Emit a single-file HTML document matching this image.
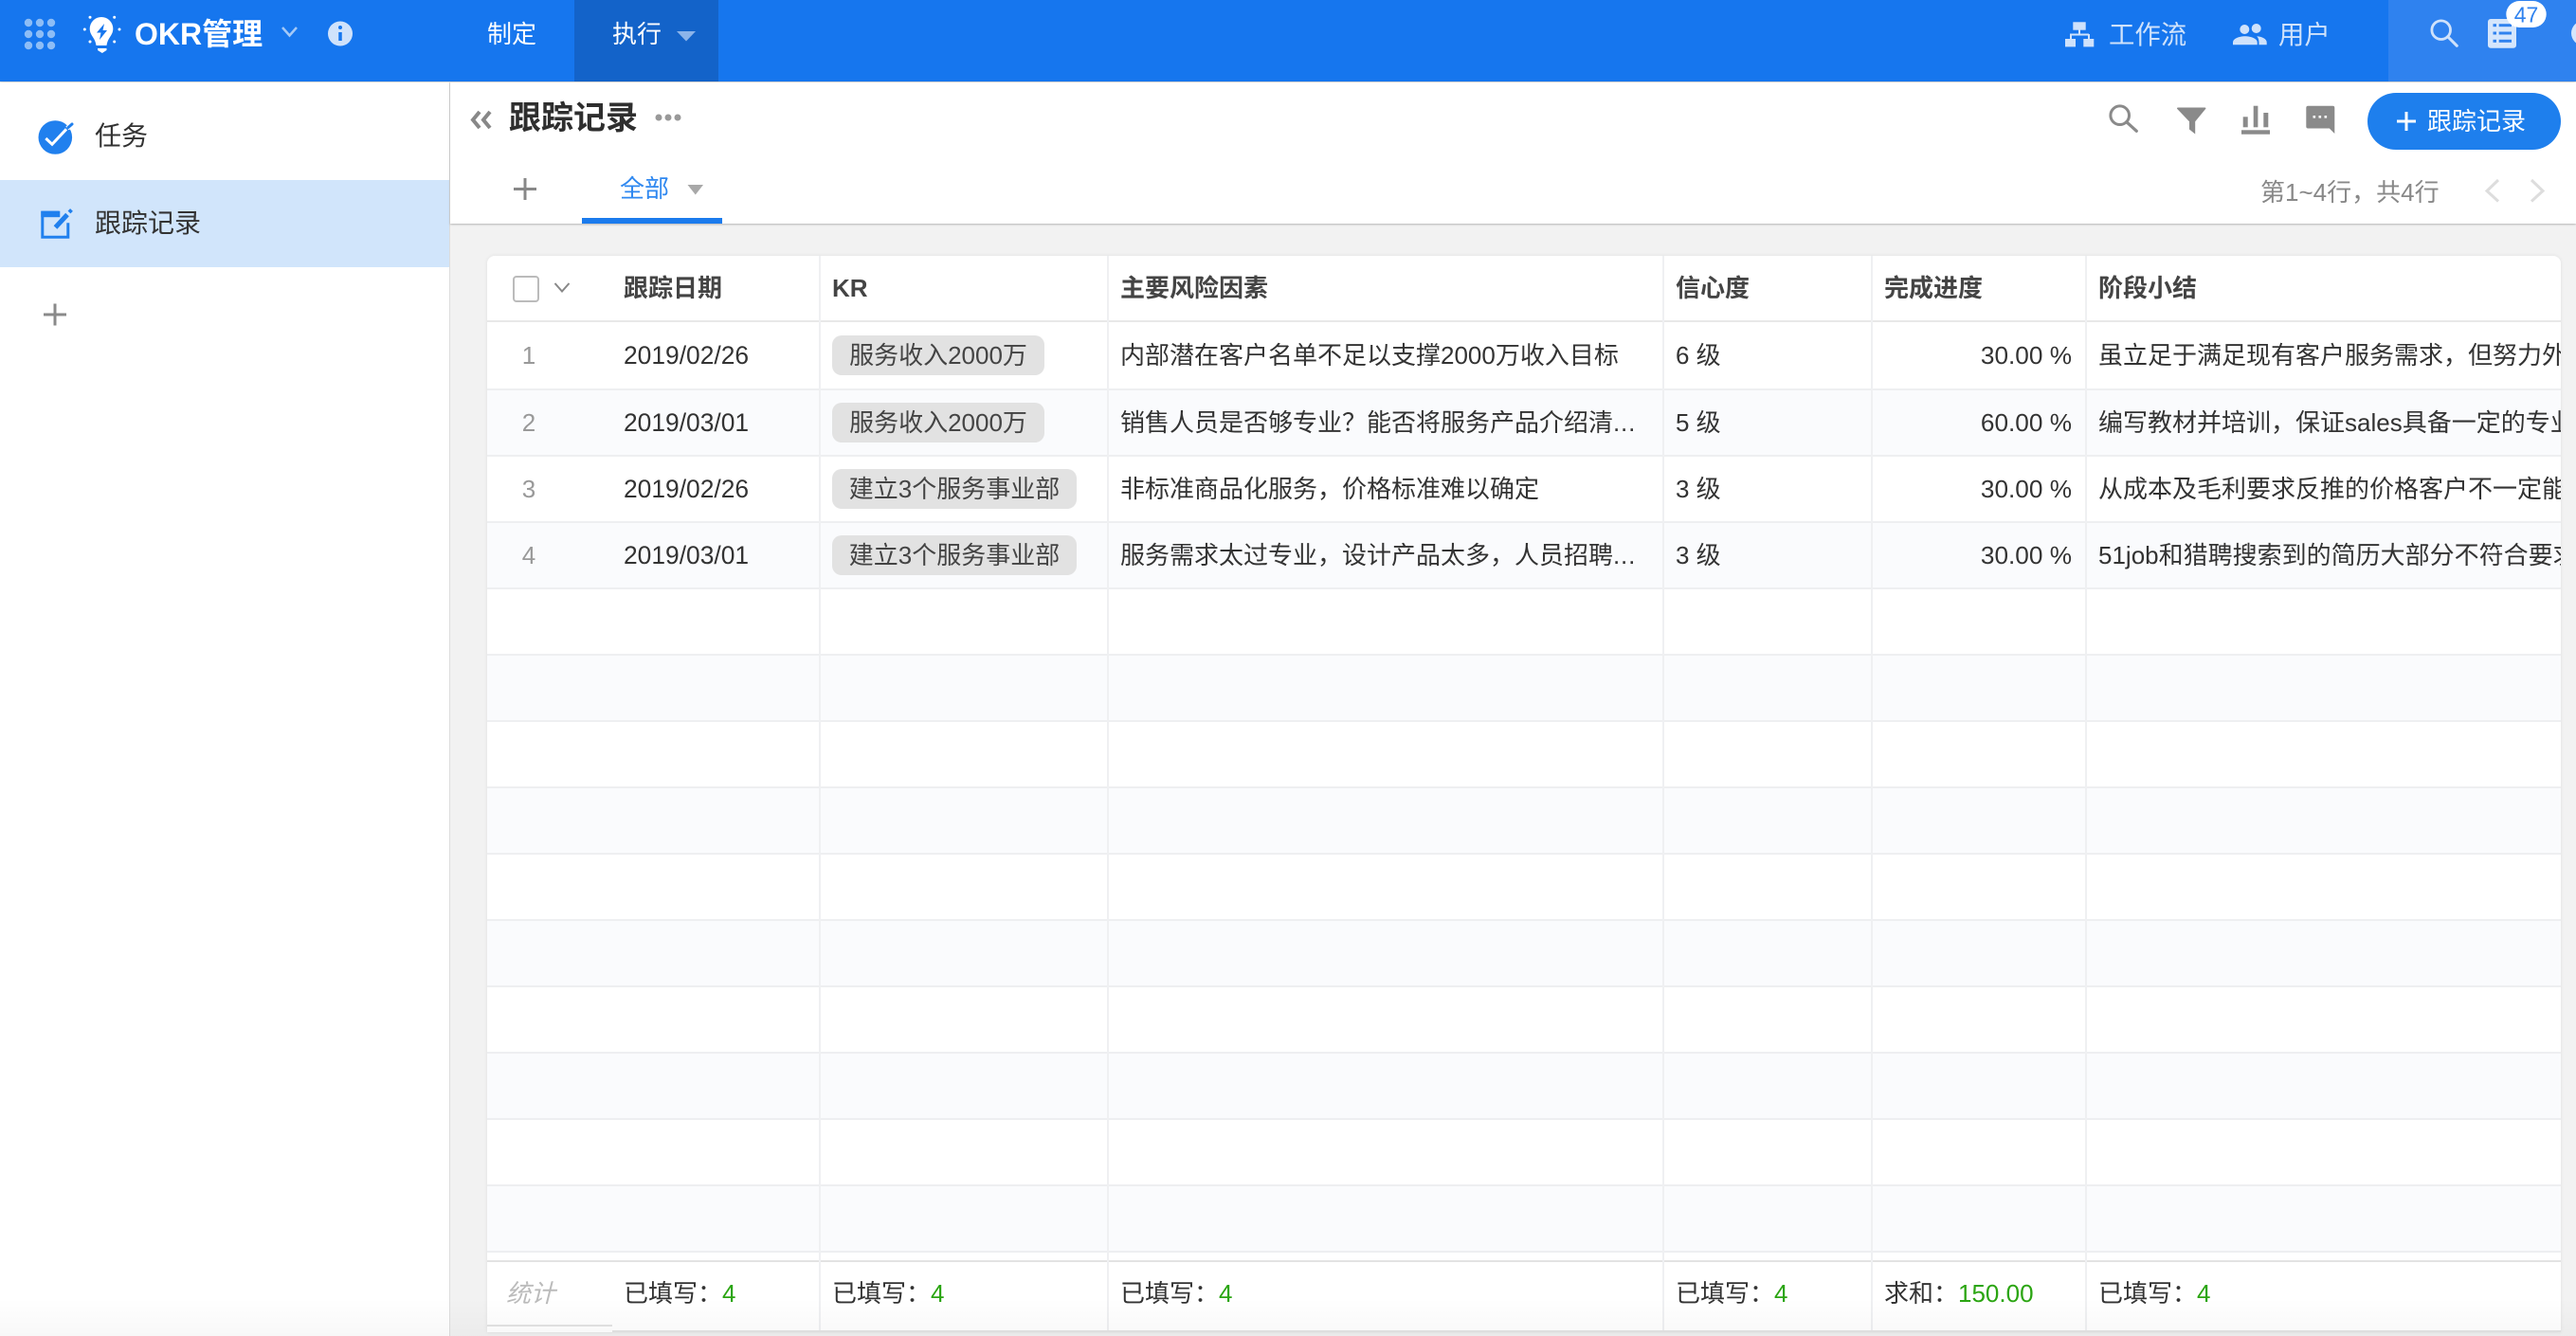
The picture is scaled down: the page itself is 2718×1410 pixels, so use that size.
<!DOCTYPE html>
<html lang="zh-CN">
<head>
<meta charset="utf-8">
<title>跟踪记录</title>
<style>
html,body{margin:0;padding:0;}
body{width:2718px;height:1410px;position:relative;overflow:hidden;background:#f2f2f2;font-family:"Liberation Sans","Noto Sans CJK SC",sans-serif;color:#333;font-size:26px;}
.b{position:absolute;}
.t{position:absolute;white-space:nowrap;height:40px;line-height:40px;font-size:26px;color:#333;}
.h{font-weight:700;color:#444;}
.g{color:#2ba512;}
.n{color:#999;width:40px;text-align:center;left:538px;}
.d{font-size:26.4px;left:658px;}
.e{letter-spacing:.8px;}
.tag{position:absolute;left:878px;height:42px;line-height:42px;background:#e2e2e2;border-radius:10px;color:#444;font-size:26px;text-align:center;white-space:nowrap;}
.v{position:absolute;width:2px;background:#eff0f2;top:270px;height:1136px;}
.l{position:absolute;left:514px;width:2188px;height:2px;background:#eeeff1;}
.a{position:absolute;left:514px;width:2188px;height:70px;background:#fafbfd;}
.r{width:2186px;left:0;text-align:right;font-size:26.2px;}
</style>
</head>
<body>
<!-- top bar -->
<div class="b" style="left:0;top:0;width:2718px;height:86px;background:#1676ee;box-shadow:0 1px 3px rgba(0,0,0,.2);"></div>
<div class="b" style="left:606px;top:0;width:152px;height:86px;background:#1363c9;"></div>
<div class="b" style="left:2520px;top:0;width:198px;height:86px;background:#2f82ef;"></div>

<!-- sidebar -->
<div class="b" style="left:0;top:87px;width:474px;height:1323px;background:#fff;border-right:1px solid #ddd;"></div>
<div class="b" style="left:0;top:190px;width:474px;height:92px;background:#d1e5fb;"></div>

<!-- header -->
<div class="b" style="left:475px;top:87px;width:2243px;height:149px;background:#fff;box-shadow:0 1px 2px rgba(0,0,0,.25);"></div>
<div class="b" style="left:614px;top:230px;width:148px;height:6px;background:#1b7bed;"></div>

<!-- table card -->
<div class="b" style="left:514px;top:270px;width:2188px;height:1136px;background:#fff;border-radius:8px 8px 0 0;box-shadow:0 0 4px rgba(0,0,0,.08);"></div>
<div class="a" style="top:412px;height:68px;"></div>
<div class="a" style="top:552px;height:68px;"></div>
<div class="a" style="top:692px;height:68px;"></div>
<div class="a" style="top:832px;height:68px;"></div>
<div class="a" style="top:972px;height:68px;"></div>
<div class="a" style="top:1112px;height:68px;"></div>
<div class="a" style="top:1252px;height:68px;"></div>

<div class="l" style="top:338px;background:#e8e8e8;"></div>
<div class="l" style="top:410px;"></div>
<div class="l" style="top:480px;"></div>
<div class="l" style="top:550px;"></div>
<div class="l" style="top:620px;"></div>
<div class="l" style="top:690px;"></div>
<div class="l" style="top:760px;"></div>
<div class="l" style="top:830px;"></div>
<div class="l" style="top:900px;"></div>
<div class="l" style="top:970px;"></div>
<div class="l" style="top:1040px;"></div>
<div class="l" style="top:1110px;"></div>
<div class="l" style="top:1180px;"></div>
<div class="l" style="top:1250px;"></div>
<div class="l" style="top:1320px;"></div>
<div class="l" style="top:1330px;background:#e3e3e3;"></div>

<div class="v" style="left:864px;"></div>
<div class="v" style="left:1168px;"></div>
<div class="v" style="left:1754px;"></div>
<div class="v" style="left:1974px;"></div>
<div class="v" style="left:2200px;"></div>

<div class="b" style="left:514px;top:1398px;width:132px;height:2px;background:#e3e3e3;"></div>
<div class="b" style="left:514px;top:1400px;width:132px;height:6px;background:#fff;"></div>
<div class="b" style="left:646px;top:1404px;width:2056px;height:2px;background:#e3e3e3;"></div>

<!-- top bar text -->
<div class="t" style="left:142px;top:16px;font-size:32px;font-weight:700;color:#fff;">OKR管理</div>
<div class="t" style="left:514px;top:16px;color:#fff;">制定</div>
<div class="t" style="left:646px;top:16px;color:#fff;">执行</div>
<div class="t" style="left:2225px;top:17px;font-size:27.4px;color:#cfe2fb;">工作流</div>
<div class="t" style="left:2404px;top:17px;font-size:27.4px;color:#cfe2fb;">用户</div>

<!-- sidebar text -->
<div class="t" style="left:100px;top:124px;font-size:28px;">任务</div>
<div class="t" style="left:100px;top:216px;font-size:28px;">跟踪记录</div>

<!-- header text -->
<div class="t" style="left:537px;top:105px;font-size:34px;font-weight:700;color:#2e2e2e;">跟踪记录</div>
<div class="t" style="left:654px;top:179px;color:#2f88f0;">全部</div>
<div class="t" style="left:2385px;top:183px;color:#888;">第1~4行，共4行</div>

<!-- table header -->
<div class="t h" style="left:658px;top:284px;">跟踪日期</div>
<div class="t h" style="left:878px;top:284px;">KR</div>
<div class="t h" style="left:1182px;top:284px;">主要风险因素</div>
<div class="t h" style="left:1768px;top:284px;">信心度</div>
<div class="t h" style="left:1988px;top:284px;">完成进度</div>
<div class="t h" style="left:2214px;top:284px;">阶段小结</div>
<div class="b" style="left:541px;top:291px;width:24px;height:24px;border:2px solid #bbb;border-radius:4px;background:#fff;"></div>

<!-- rows -->
<div class="t n" style="top:355px;">1</div>
<div class="t d" style="top:355px;">2019/02/26</div>
<div class="tag" style="top:354px;width:224px;">服务收入2000万</div>
<div class="t" style="left:1182px;top:355px;">内部潜在客户名单不足以支撑2000万收入目标</div>
<div class="t" style="left:1768px;top:355px;">6 级</div>
<div class="t r" style="top:355px;">30.00 %</div>
<div class="b" style="left:2214px;top:355px;width:488px;height:40px;overflow:hidden;"><div class="t" style="left:0;top:0;">虽立足于满足现有客户服务需求，但努力外部拓展</div></div>

<div class="t n" style="top:426px;">2</div>
<div class="t d" style="top:426px;">2019/03/01</div>
<div class="tag" style="top:425px;width:224px;">服务收入2000万</div>
<div class="t" style="left:1182px;top:426px;">销售人员是否够专业？能否将服务产品介绍清<span class="e">...</span></div>
<div class="t" style="left:1768px;top:426px;">5 级</div>
<div class="t r" style="top:426px;">60.00 %</div>
<div class="b" style="left:2214px;top:426px;width:488px;height:40px;overflow:hidden;"><div class="t" style="left:0;top:0;">编写教材并培训，保证sales具备一定的专业知识</div></div>

<div class="t n" style="top:496px;">3</div>
<div class="t d" style="top:496px;">2019/02/26</div>
<div class="tag" style="top:495px;width:258px;">建立3个服务事业部</div>
<div class="t" style="left:1182px;top:496px;">非标准商品化服务，价格标准难以确定</div>
<div class="t" style="left:1768px;top:496px;">3 级</div>
<div class="t r" style="top:496px;">30.00 %</div>
<div class="b" style="left:2214px;top:496px;width:488px;height:40px;overflow:hidden;"><div class="t" style="left:0;top:0;">从成本及毛利要求反推的价格客户不一定能接受</div></div>

<div class="t n" style="top:566px;">4</div>
<div class="t d" style="top:566px;">2019/03/01</div>
<div class="tag" style="top:565px;width:258px;">建立3个服务事业部</div>
<div class="t" style="left:1182px;top:566px;">服务需求太过专业，设计产品太多，人员招聘<span class="e">...</span></div>
<div class="t" style="left:1768px;top:566px;">3 级</div>
<div class="t r" style="top:566px;">30.00 %</div>
<div class="b" style="left:2214px;top:566px;width:488px;height:40px;overflow:hidden;"><div class="t" style="left:0;top:0;">51job和猎聘搜索到的简历大部分不符合要求的人才</div></div>

<!-- footer -->
<div class="t" style="left:534px;top:1345px;color:#bbb;font-style:italic;">统计</div>
<div class="t" style="left:658px;top:1345px;">已填写：<span class="g">4</span></div>
<div class="t" style="left:878px;top:1345px;">已填写：<span class="g">4</span></div>
<div class="t" style="left:1182px;top:1345px;">已填写：<span class="g">4</span></div>
<div class="t" style="left:1768px;top:1345px;">已填写：<span class="g">4</span></div>
<div class="t" style="left:1988px;top:1345px;">求和：<span class="g">150.00</span></div>
<div class="t" style="left:2214px;top:1345px;">已填写：<span class="g">4</span></div>

<!-- icons -->
<svg class="b" style="left:0;top:0;" width="2718" height="1410" viewBox="0 0 2718 1410" xmlns="http://www.w3.org/2000/svg">
  <!-- grid -->
  <g fill="#8dbdf6">
    <circle cx="30" cy="24" r="4.2"/><circle cx="42" cy="24" r="4.2"/><circle cx="54" cy="24" r="4.2"/>
    <circle cx="30" cy="36" r="4.2"/><circle cx="42" cy="36" r="4.2"/><circle cx="54" cy="36" r="4.2"/>
    <circle cx="30" cy="48" r="4.2"/><circle cx="42" cy="48" r="4.2"/><circle cx="54" cy="48" r="4.2"/>
  </g>
  <!-- bulb -->
  <g fill="#fff">
    <path d="M107 18a12.300 12.300 0 0 1 12.300 12.300c0 4.200-2 7-3.800 9.700-1.300 2-2.400 4.300-3 8h-11c-.6-3.700-1.700-6-3-8-1.800-2.700-3.800-5.500-3.800-9.700A12.300 12.300 0 0 1 107 18z"/>
    <path d="M103 51h9.500v2l-4.700 3-4.800-3z"/>
    <circle cx="95" cy="18.300" r="1.500"/><circle cx="120.700" cy="18.300" r="1.500"/><circle cx="89.300" cy="31" r="1.500"/><circle cx="126" cy="31" r="1.500"/><circle cx="95" cy="44" r="1.500"/><circle cx="120.700" cy="44" r="1.500"/>
  </g>
  <path d="M110 25l-8 9.500h4.500l-1.500 7.500 8-10h-4.500z" fill="#1676ee"/>
  <!-- chevron -->
  <path d="M298 29l7.500 8.500 7.500-8.500" fill="none" stroke="#a4c9f7" stroke-width="2.500"/>
  <!-- info -->
  <circle cx="359" cy="35.500" r="13" fill="#cfe2fb"/>
  <path d="M359 34v9" stroke="#1676ee" stroke-width="3.500"/><circle cx="359" cy="29" r="2" fill="#1676ee"/>
  <!-- exec triangle -->
  <path d="M714 33h20l-10 10.500z" fill="#8bb4ea"/>
  <!-- workflow -->
  <g fill="#cfe2fb">
    <rect x="2187.300" y="23.300" width="13.400" height="8.400"/>
    <rect x="2179" y="41" width="11" height="8.400"/>
    <rect x="2198.300" y="41" width="11" height="8.400"/>
    <rect x="2193" y="31" width="2" height="5"/>
    <rect x="2184" y="35.500" width="20" height="2"/>
    <rect x="2184" y="36" width="2" height="6"/>
    <rect x="2203" y="36" width="2" height="6"/>
  </g>
  <!-- users -->
  <g fill="#cfe2fb">
    <circle cx="2368.300" cy="31" r="5"/><circle cx="2380.700" cy="30" r="5"/>
    <path d="M2356 47.300v-2.500c0-4 6.500-6.500 12.800-6.500s12.900 2.500 12.900 6.500v2.500z"/>
    <path d="M2383.500 47.300h8.200v-2.500c0-3.800-5-6.100-10.500-6.500 1.500 1.500 2.300 3.700 2.300 6.500z"/>
  </g>
  <!-- top right search -->
  <circle cx="2575.700" cy="31.700" r="9.800" fill="none" stroke="#cfe2fb" stroke-width="2.800"/>
  <path d="M2582.700 38.700l9.600 9.600" stroke="#cfe2fb" stroke-width="3" stroke-linecap="round"/>
  <!-- sheet -->
  <rect x="2625" y="20" width="30" height="30.700" rx="3" fill="#d5e6fc"/>
  <g fill="#2f82ef">
    <rect x="2630.500" y="25.200" width="3.500" height="3"/><rect x="2636.700" y="25.200" width="13.300" height="3"/>
    <rect x="2630.500" y="33.500" width="3.500" height="3"/><rect x="2636.700" y="33.500" width="13.300" height="3"/>
    <rect x="2630.500" y="41.800" width="3.500" height="3"/><rect x="2636.700" y="41.800" width="13.300" height="3"/>
  </g>
  <rect x="2644.300" y="1" width="42.400" height="28" rx="14" fill="#fff"/>
  <text x="2665.500" y="23.500" font-family="Liberation Sans" font-size="23" fill="#2f82ef" text-anchor="middle">47</text>
  <circle cx="2726" cy="35" r="13" fill="#d5e6fc"/>
  <!-- sidebar icons -->
  <circle cx="58.300" cy="145" r="17.800" fill="#2080ee"/>
  <path d="M48.300 146l6.700 6.300 15-16" fill="none" stroke="#fff" stroke-width="3"/>
  <path d="M71 135.500l5-4.500" stroke="#fff" stroke-width="5"/>
  <path d="M72 134.500l4-3.500" stroke="#2080ee" stroke-width="3" stroke-linecap="round"/>
  <path d="M62 224.200H44.800v26h27v-15" fill="none" stroke="#2080ee" stroke-width="3"/>
  <rect x="43.300" y="222.700" width="20" height="6.500" fill="#2080ee"/>
  <path d="M58.500 240l12.500-13.500" stroke="#2080ee" stroke-width="5"/>
  <path d="M73 224l2.500-2.500" stroke="#2080ee" stroke-width="4"/>
  <path d="M46 332h24M58 320.500v23" stroke="#8a8a8a" stroke-width="3"/>
  <!-- collapse -->
  <g fill="none" stroke="#888" stroke-width="4">
    <path d="M506 118l-7 8.500 7 8.500M517 118l-7 8.500 7 8.500"/>
  </g>
  <g fill="#999"><circle cx="695" cy="124" r="3.500"/><circle cx="705" cy="124" r="3.500"/><circle cx="715" cy="124" r="3.500"/></g>
  <path d="M542 199.500h24M554 188v23" stroke="#888" stroke-width="3"/>
  <path d="M725.500 195h16.500l-8.200 10.500z" fill="#a8a8a8"/>
  <!-- toolbar -->
  <circle cx="2236.700" cy="121.700" r="9.800" fill="none" stroke="#8a8a8a" stroke-width="3"/>
  <path d="M2243.700 128.700l10.600 9.600" stroke="#8a8a8a" stroke-width="3.200" stroke-linecap="round"/>
  <path d="M2298 113.500h28.500c.8 0 1.200.8.700 1.400l-11 13.400v13.200l-6.200-5v-8.200l-12.800-13.400c-.5-.6 0-1.400.8-1.400z" fill="#8a8a8a"/>
  <g fill="#8a8a8a">
    <rect x="2366.700" y="123.300" width="5" height="11"/>
    <rect x="2377.700" y="111.700" width="4.700" height="22.600"/>
    <rect x="2388.300" y="119" width="5" height="15.300"/>
    <rect x="2365" y="137.300" width="30" height="4.400"/>
    <path d="M2435.300 111.700h26a2 2 0 0 1 2 2v27.300l-5.500-5.500h-22.500a2 2 0 0 1-2-2v-19.800a2 2 0 0 1 2-2z"/>
  </g>
  <g fill="#fff"><rect x="2440.500" y="122" width="2.600" height="2.600"/><rect x="2446.500" y="122" width="2.600" height="2.600"/><rect x="2452.500" y="122" width="2.600" height="2.600"/></g>
  <!-- add button -->
  <rect x="2498" y="98" width="204" height="60" rx="30" fill="#1e7fed"/>
  <path d="M2529 128h20M2539 118v20" stroke="#fff" stroke-width="3"/>
  <!-- pagination -->
  <path d="M2636 190l-12 11.500 12 11M2671 190l12 11.500-12 11" fill="none" stroke="#ddd" stroke-width="3"/>
  <!-- header chevron -->
  <path d="M585.500 299l7.500 8.500 7.500-8.500" fill="none" stroke="#888" stroke-width="2"/>
</svg>

<!-- button text above icons -->
<div class="t" style="left:2561px;top:108px;color:#fff;">跟踪记录</div>
<!-- bottom fade -->
<div class="b" style="left:0;top:1370px;width:2718px;height:40px;background:linear-gradient(to bottom,rgba(0,0,0,0),rgba(0,0,0,.028));"></div>
</body>
</html>
